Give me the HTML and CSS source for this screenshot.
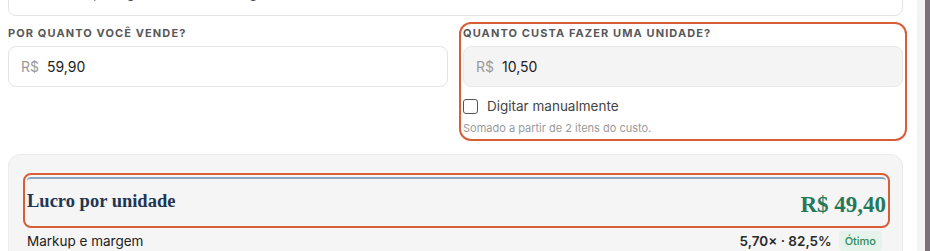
FILE: index.html
```html
<!DOCTYPE html>
<html lang="pt-BR">
<head>
    <meta charset="UTF-8">
    <meta name="viewport" content="width=device-width, initial-scale=1.0">
    <title>Calculadora de preço</title>
    <link rel="stylesheet" href="styles.css">
</head>
<body>
    <div class="viewport">
        <main class="content">
            <div class="money-input top-input">
                <span class="top-text">Bolo de pote gourmet de morango</span>
            </div>

            <div class="price-grid">
                <div class="field">
                    <label class="field-label">Por quanto você vende?</label>
                    <div class="money-input">
                        <span class="prefix">R$</span>
                        <span class="value">59,90</span>
                    </div>
                </div>

                <div class="field highlight">
                    <label class="field-label">Quanto custa fazer uma unidade?</label>
                    <div class="money-input disabled">
                        <span class="prefix">R$</span>
                        <span class="value">10,50</span>
                    </div>
                    <label class="check-row">
                        <span class="checkbox"></span>
                        Digitar manualmente
                    </label>
                    <p class="hint">Somado a partir de 2 itens do custo.</p>
                </div>
            </div>

            <section class="result-card">
                <div class="profit-row highlight">
                    <h2 class="profit-title">Lucro por unidade</h2>
                    <span class="profit-value">R$ 49,40</span>
                </div>
                <div class="stat-row">
                    <span class="stat-name">Markup e margem</span>
                    <span class="stat-value">
                        5,70× · 82,5%
                        <span class="badge">Ótimo</span>
                    </span>
                </div>
            </section>
        </main>
        <div class="scrollbar"></div>
    </div>
</body>
</html>
```

FILE: styles.css
```css
:root {
    --text-color: #222222;
    --label-color: #585858;
    --muted-color: #9a9a9a;
    --border-color: #e3e3e3;
    --accent-color: #d65f38;
    --navy-color: #1f3654;
    --green-color: #25795a;
}

* {
    box-sizing: border-box;
}

body {
    margin: 0;
    font-family: Inter, "Noto Sans", sans-serif;
    color: var(--text-color);
    background-color: #ffffff;
    overflow: hidden;
}

.viewport {
    display: flex;
    height: 251px;
    overflow: hidden;
}

.content {
    flex: 1;
    padding: 0 14px 0 8px;
}

.scrollbar {
    width: 13px;
    background-color: #f3f3f3;
    border-right: 5px solid #7b7279;
}

.money-input {
    display: flex;
    align-items: center;
    gap: 8px;
    height: 41px;
    padding: 0 12px;
    border: 1px solid var(--border-color);
    border-radius: 8px;
    background-color: #ffffff;
    font-size: 14px;
}

.money-input.disabled {
    background-color: #f4f4f4;
    border-color: #e9e9e9;
}

.top-input {
    margin-top: -25px;
    padding-left: 30px;
    align-items: flex-end;
}

.top-text {
    color: #555555;
    line-height: 1;
    margin-bottom: 15px;
    font-size: 14px;
}

.prefix {
    color: var(--muted-color);
}

.value {
    color: var(--text-color);
}

.price-grid {
    display: grid;
    grid-template-columns: 1fr 1fr;
    gap: 15px;
    margin-top: 10px;
}

.field {
    display: flex;
    flex-direction: column;
    padding-bottom: 2px;
}

.highlight {
    outline: 2px solid var(--accent-color);
    outline-offset: 2px;
    border-radius: 8px;
}

.field-label {
    font-size: 11px;
    line-height: 14px;
    font-weight: 700;
    letter-spacing: 0.1em;
    text-transform: uppercase;
    color: var(--label-color);
    margin-bottom: 6px;
}

.check-row {
    display: flex;
    align-items: center;
    gap: 9px;
    margin-top: 11px;
    font-size: 13.5px;
    line-height: 16px;
    color: #444444;
}

.checkbox {
    width: 15px;
    height: 15px;
    border: 1.5px solid #555555;
    border-radius: 3px;
    background-color: #ffffff;
}

.hint {
    margin: 7px 0 0;
    font-size: 11px;
    line-height: 14px;
    color: var(--muted-color);
}

.result-card {
    margin-top: 17px;
    padding: 22px 16px 0 18px;
    height: 120px;
    background-color: #f5f5f5;
    border: 1px solid #ebebeb;
    border-radius: 12px;
}

.profit-row {
    display: flex;
    justify-content: space-between;
    align-items: flex-end;
    height: 47px;
    padding-bottom: 7px;
    border-top: 2px solid #8ba6be;
    border-radius: 4px;
}

.profit-title {
    margin: 0 0 5px;
    font-family: "Liberation Serif", "DejaVu Serif", serif;
    font-size: 18.5px;
    font-weight: 700;
    line-height: 22px;
    color: var(--navy-color);
}

.profit-value {
    font-family: "Liberation Serif", "DejaVu Serif", serif;
    font-size: 23px;
    font-weight: 700;
    line-height: 24px;
    color: var(--green-color);
}

.stat-row {
    display: flex;
    justify-content: space-between;
    align-items: center;
    margin-top: 7px;
    padding-right: 4px;
    font-size: 13.5px;
}

.stat-value {
    display: flex;
    align-items: center;
    gap: 7px;
    font-weight: 600;
    color: #2a2a2a;
}

.badge {
    padding: 3px 6px;
    border-radius: 4px;
    background-color: #e5f3ea;
    color: #2f8a55;
    font-size: 11px;
    font-weight: 500;
}
```
